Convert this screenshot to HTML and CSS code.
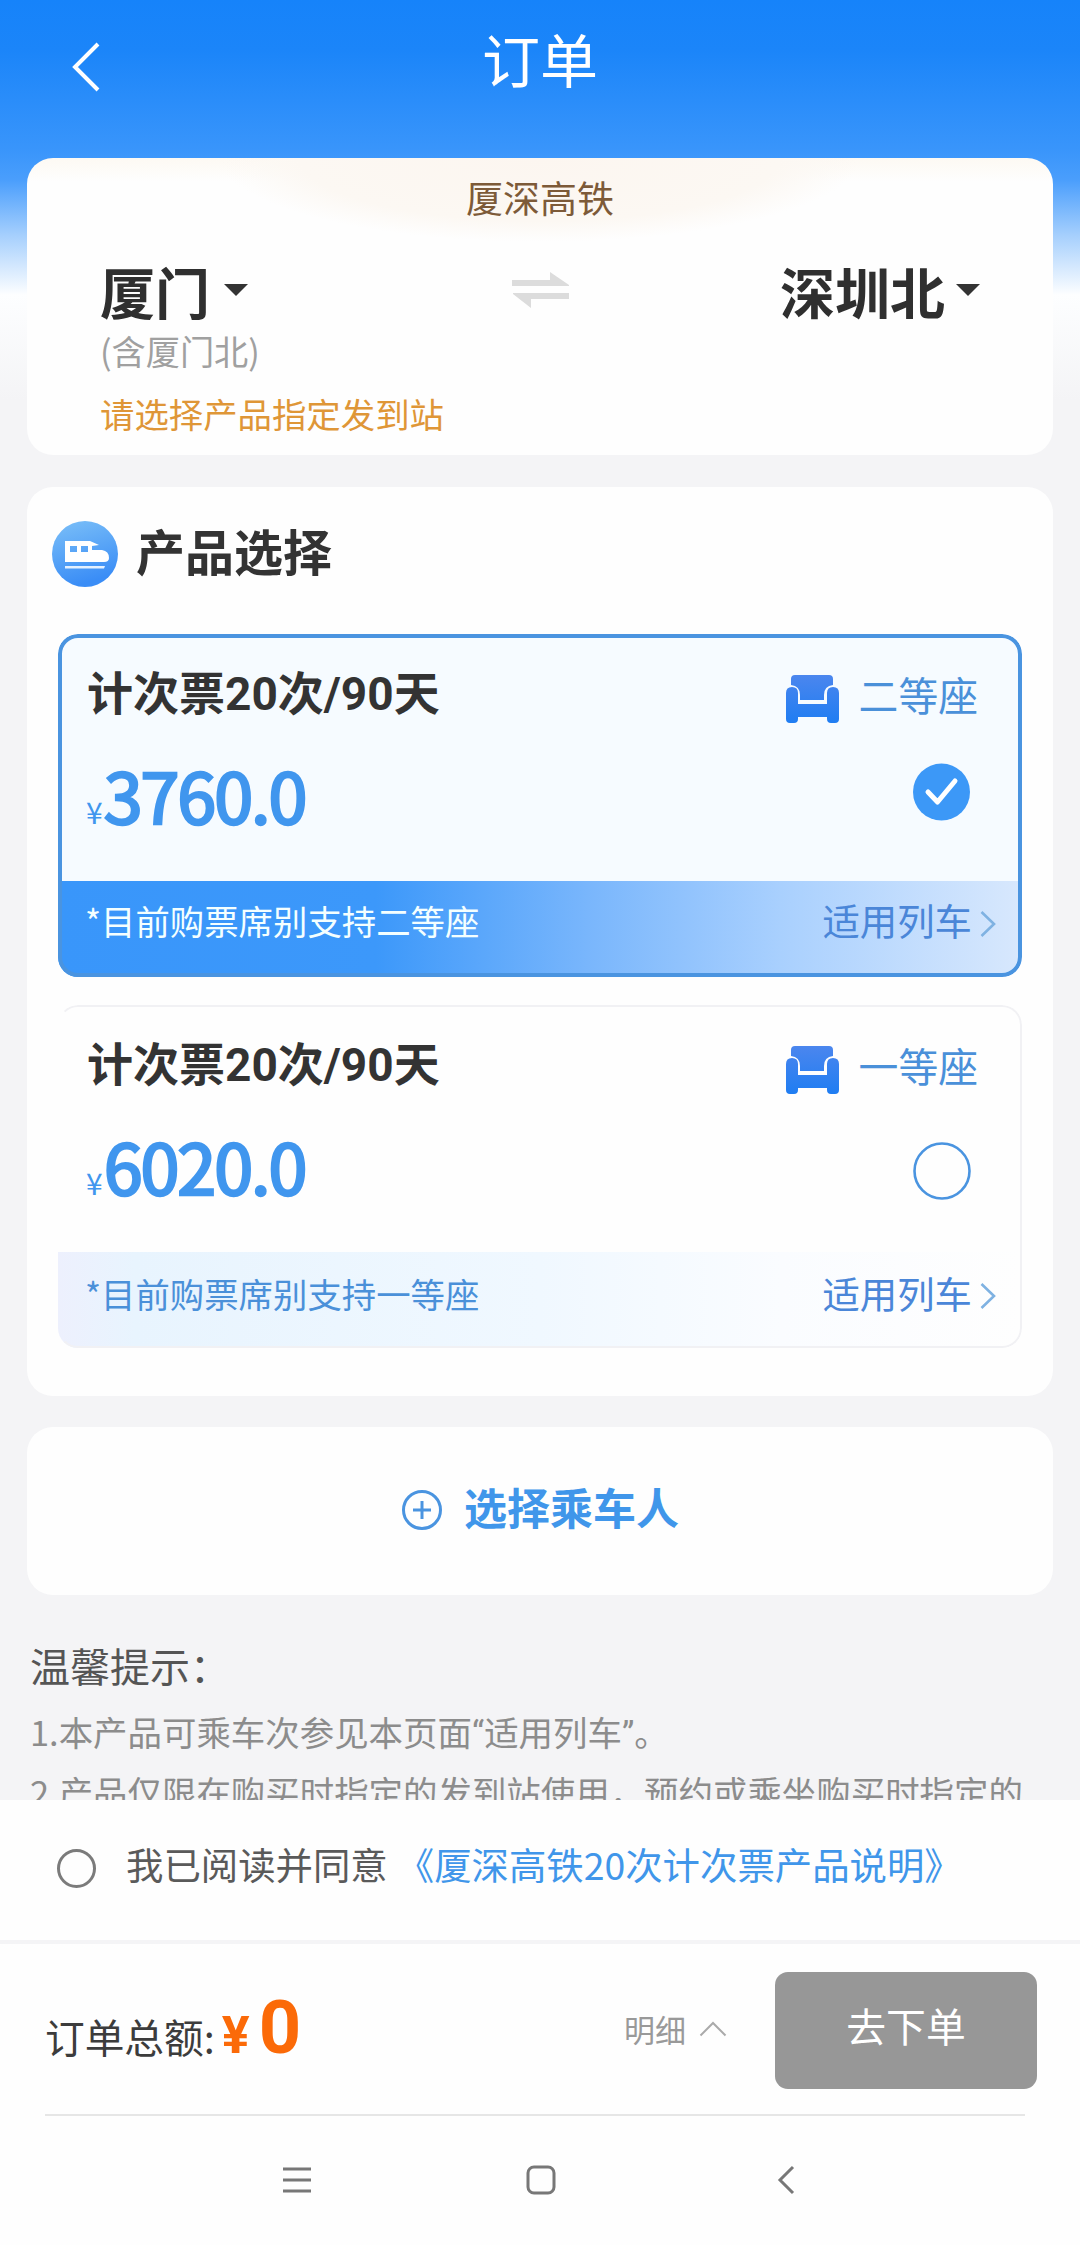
FILE: index.html
```html
<!DOCTYPE html>
<html lang="zh-CN">
<head>
<meta charset="utf-8">
<title>订单</title>
<link rel="stylesheet" href="styles.css">
</head>
<body>
<svg width="0" height="0" class="defs">
  <defs>
    <linearGradient id="seatFill" x1="0" y1="0" x2="0" y2="48" gradientUnits="userSpaceOnUse"><stop offset="0" stop-color="#4b86ee"/><stop offset="1" stop-color="#1f7df2"/></linearGradient>
    <linearGradient id="trainFill" x1="0" y1="0" x2="0.3" y2="1"><stop offset="0" stop-color="#7cc0f8"/><stop offset="1" stop-color="#3a8df6"/></linearGradient>
    <symbol id="seat" viewBox="0 0 53 48">
      <path fill="url(#seatFill)" d="M9 0H43Q47 0 47 4V10Q38 11 38 20V25H14V20Q14 11 5 10V4Q5 0 9 0Z"/>
      <path fill="url(#seatFill)" d="M0 18Q0 12 6 12Q12 12 12 18V29H41V18Q41 12 47 12Q53 12 53 18V44Q53 48 49 48H45Q41 48 41 44V42H12V44Q12 48 8 48H4Q0 48 0 44Z"/>
    </symbol>
  </defs>
</svg>
<main class="content">
  <header class="header">
    <svg class="back" width="32" height="54" viewBox="0 0 32 54"><path d="M28 4L5 27L28 50"/></svg>
    <h1>订单</h1>
  </header>

  <section class="card route">
    <div class="line-name">厦深高铁</div>
    <div class="stations">
      <div class="station">厦门<i class="caret"></i></div>
      <svg class="swap" width="57" height="36" viewBox="0 0 57 36"><path d="M0 8H38V0L57 13V14H0Z"/><path d="M57 27H19V36L1 22V21H57Z"/></svg>
      <div class="station end">深圳北<i class="caret"></i></div>
    </div>
    <div class="station-note">(含厦门北)</div>
    <div class="notice">请选择产品指定发到站</div>
  </section>

  <section class="card products">
    <div class="section-head">
      <svg width="66" height="66" viewBox="0 0 66 66"><circle cx="33" cy="33" r="33" fill="url(#trainFill)"/>
        <path fill="#fff" fill-rule="evenodd" d="M13 20H38L47 24L40 25V29H50Q57 30 57 37Q57 41 52 41H13ZM18 25V31H25V25ZM29 25V31H36V25Z"/><path fill="#e4f1ff" d="M13 45H53L52 47.500H13Z"/></svg>
      <h2>产品选择</h2>
    </div>

    <article class="option selected">
      <div class="option-body">
        <div class="option-left">
          <h3>计次票20次/90天</h3>
          <div class="price"><small>¥</small>3760.0</div>
        </div>
        <div class="option-right">
          <div class="seat"><svg width="53" height="48"><use href="#seat"/></svg>二等座</div>
          <svg class="radio" width="58" height="58" viewBox="0 0 58 58"><circle cx="28.500" cy="29" r="28.500" fill="#3c98f7"/><path d="M15 29L24.500 39L42 18" fill="none" stroke="#fff" stroke-width="5" stroke-linecap="round" stroke-linejoin="round"/></svg>
        </div>
      </div>
      <div class="option-foot"><span>*目前购票席别支持二等座</span><a>适用列车<svg width="16" height="28" viewBox="0 0 16 28"><path d="M1.500 2L14 14L1.500 26"/></svg></a></div>
    </article>

    <article class="option">
      <div class="option-body">
        <div class="option-left">
          <h3>计次票20次/90天</h3>
          <div class="price"><small>¥</small>6020.0</div>
        </div>
        <div class="option-right">
          <div class="seat"><svg width="53" height="48"><use href="#seat"/></svg>一等座</div>
          <svg class="radio empty" width="58" height="58" viewBox="0 0 58 58"><circle cx="29" cy="29" r="27.500" fill="none" stroke="#4a94e0" stroke-width="2.600"/></svg>
        </div>
      </div>
      <div class="option-foot"><span>*目前购票席别支持一等座</span><a>适用列车<svg width="16" height="28" viewBox="0 0 16 28"><path d="M1.500 2L14 14L1.500 26"/></svg></a></div>
    </article>
  </section>

  <section class="card passenger">
    <svg width="42" height="42" viewBox="0 0 42 42"><circle cx="21" cy="21" r="18.500"/><path d="M12 21H30M21 12V30"/></svg>
    <span>选择乘车人</span>
  </section>

  <section class="tips">
    <h4>温馨提示：</h4>
    <p>1.本产品可乘车次参见本页面<q>适用列车</q>。</p>
    <p>2.产品仅限在购买时指定的发到站使用，预约或乘坐购买时指定的</p>
  </section>
</main>

<div class="agreement">
  <i class="agree-radio"></i>
  <span>我已阅读并同意</span>
  <a>《厦深高铁20次计次票产品说明》</a>
</div>

<footer class="checkout">
  <div class="total"><span>订单总额:</span><b class="yen">¥</b><b class="amount">0</b></div>
  <div class="detail">明细<svg width="28" height="16" viewBox="0 0 28 16"><path d="M1.500 14.500L14 2L26.500 14.500"/></svg></div>
  <button class="submit">去下单</button>
</footer>

<nav class="sysnav">
  <svg width="28" height="30" viewBox="0 0 28 30"><path d="M0 4H28M0 15H28M0 26H28"/></svg>
  <svg width="30" height="30" viewBox="0 0 30 30"><rect x="2" y="2" width="26" height="26" rx="6"/></svg>
  <svg width="30" height="30" viewBox="0 0 30 30"><path d="M18 2L5 15L18 28"/></svg>
</nav>
</body>
</html>
```
FILE: styles.css
```css
* { box-sizing: border-box; margin: 0; padding: 0; }
body {
  width: 1080px; height: 2245px; overflow: hidden;
  display: flex; flex-direction: column;
  font-family: "Noto Sans CJK SC", "Noto Sans", sans-serif;
  background: #fefefe; color: #333;
}
h1, h2, h3, h4, i { font-style: normal; }
svg { display: block; flex: none; }
.defs { position: absolute; }
.content {
  height: 1800px; overflow: hidden; flex: none;
  background: linear-gradient(#1683fa 0, #1b85f9 50px, #3995fb 150px, #4a9efc 180px, #a5cffd 235px, #fdfeff 295px, #f4f4f6 400px);
}
.header { height: 158px; position: relative; padding-top: 12px; }
.header h1 { font-size: 58px; font-weight: 400; line-height: 92px; text-align: center; color: #fff; }
.back { position: absolute; left: 70px; top: 40px; fill: none; stroke: #fff; stroke-width: 4; }

.card { margin: 0 27px; background: #fefefe; border-radius: 26px; }
.route {
  height: 297px; padding: 9px 73px 0 73px;
  background: radial-gradient(ellipse 320px 84px at 50% 0, #fcf6f0 0, #fcf8f3 75%, rgba(253,250,247,0) 100%), linear-gradient(#fdf9f3 0, #fefefe 24px);
}
.line-name { font-size: 37px; line-height: 60px; text-align: center; color: #7d5a38; }
.stations { display: grid; grid-template-columns: 1fr auto 1fr; align-items: center; height: 70px; margin-top: 28px; }
.station { display: flex; align-items: center; gap: 14px; font-size: 55px; font-weight: 700; line-height: 70px; color: #2f2f2f; }
.station.end { justify-content: flex-end; gap: 11px; }
.caret { border: 12px solid transparent; border-top-color: #333; border-bottom-width: 0; }
.swap { fill: #dcdcdc; }
.station-note { font-size: 34.200px; line-height: 44px; margin-top: 3px; color: #a0a0a0; }
.notice { font-size: 34.400px; line-height: 50px; margin-top: 16px; color: #df9637; }

.products { height: 909px; margin-top: 32px; padding: 34px 31px 0; }
.section-head { display: flex; align-items: center; gap: 18px; margin: 0 0 47px -6px; height: 66px; }
.section-head h2 { font-size: 49px; line-height: 66px; margin-top: -9px; color: #333; }
.option { position: relative; width: 964px; height: 343px; border-radius: 20px; overflow: hidden; margin-bottom: 28px; background: #fefefe; }
.option::after { content: ""; position: absolute; inset: 0; border: 2px solid #f1f1f4; border-left-color: transparent; border-radius: 20px; }
.option.selected { background: #f6fbff; }
.option.selected::after { border: 4px solid #4a94e0; }
.option-body { height: 247px; display: flex; justify-content: space-between; padding: 26px 44px 0 29px; }
.option h3 { font-family: Roboto, "Noto Sans CJK SC", sans-serif; font-size: 46px; line-height: 62px; margin-top: 3px; color: #333; }
.price { font-size: 70px; font-weight: 400; -webkit-text-stroke: 2.600px #4096ee; line-height: 84px; letter-spacing: -2px; color: #4096ee; margin: 27px 0 0 -1px; white-space: nowrap; }
.price small { font-size: 30px; -webkit-text-stroke: 0; letter-spacing: 0; margin-right: 1px; }
.option-right { display: flex; flex-direction: column; align-items: flex-end; }
.seat { display: flex; align-items: center; gap: 20px; font-size: 39.800px; line-height: 68px; color: #4a90d9; }
.seat svg { margin-top: 9px; }
.radio { margin: 35px 7px 0 0; }
.radio.empty { margin-top: 43px; }
.option-foot { height: 96px; display: flex; align-items: center; justify-content: space-between; padding: 0 26px 15px 27px; background: linear-gradient(90deg, #edf0fd 0, #e8f4fe 8%, #f0f8ff 50%, #fafcff 75%, #fefefe 100%); font-size: 34.400px; color: #4a90d9; }
.option-foot a { display: flex; align-items: center; gap: 8px; font-size: 37.400px; color: #4a86d8; }
.option-foot a svg { fill: none; stroke: #7fb2e2; stroke-width: 2.600; margin-top: 7px; }
.selected .option-foot { padding-bottom: 18px; color: #f4ffff; background: linear-gradient(90deg, #3996fa 0, #3c98fa 33%, #79b6fc 55%, #a9d0fe 75%, #d8e8fd 100%); }

.passenger { height: 168px; margin-top: 31px; display: flex; align-items: center; justify-content: center; gap: 21px; font-size: 43px; font-weight: 700; color: #4096ea; }
.passenger svg { fill: none; stroke: #4a94e0; stroke-width: 3; margin-top: -2px; }
.passenger span { margin-top: -11px; }

.tips { padding: 38px 0 0 30px; white-space: nowrap; }
.tips h4 { font-size: 40px; font-weight: 400; line-height: 64px; margin-bottom: 4px; color: #555; }
.tips p { font-size: 34.450px; line-height: 60px; height: 60px; color: #8c8c8c; }
.tips q { quotes: none; }
.tips q::before, .tips q::after { font-family: Roboto, sans-serif; }
.tips q::before { content: "“"; }
.tips q::after { content: "”"; }

.agreement { height: 144px; flex: none; border-bottom: 4px solid #f4f4f6; display: flex; align-items: center; padding: 0 0 13px 57px; font-size: 37.400px; color: #5a5a5a; white-space: nowrap; }
.agree-radio { width: 39px; height: 39px; border: 3px solid #7b7b7b; border-radius: 50%; margin: 9px 30px 0 0; }
.agreement a { color: #4096ea; margin-left: 9px; }

.checkout { height: 172px; flex: none; display: flex; align-items: center; margin: 0 43px 0 45px; padding-top: 1px; background: linear-gradient(#e6e6e6, #e6e6e6) 0 100% / 980px 2px no-repeat; }
.total { flex: 1; display: flex; align-items: baseline; font-size: 39.700px; color: #3c3c3c; margin-top: -6px; }
.total b { font-family: Roboto, sans-serif; color: #fb6a08; }
.yen { font-size: 52px; margin-left: 7px; }
.amount { font-size: 74px; line-height: 90px; margin-left: 9px; }
.detail { display: flex; align-items: center; gap: 13px; font-size: 31px; color: #999; margin: -4px 48px 0 0; }
.detail svg { fill: none; stroke: #aaa; stroke-width: 2; }
.submit { width: 262px; height: 117px; border: 0; border-radius: 13px; background: #979797; color: #fff; font: 400 39.800px/1 "Noto Sans CJK SC", sans-serif; padding-bottom: 12px; }

.sysnav { flex: 1; display: flex; align-items: flex-start; gap: 215px; padding: 49px 0 0 283px; }
.sysnav svg { fill: none; stroke: #777; stroke-width: 3; }
.sysnav svg:last-child { margin-left: 4px; }
```
